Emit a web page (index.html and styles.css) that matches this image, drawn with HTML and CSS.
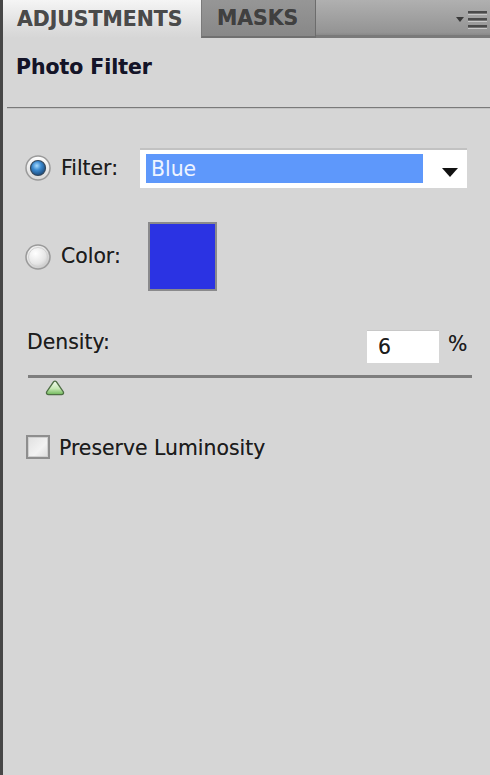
FILE: index.html
```html
<!DOCTYPE html>
<html>
<head>
<meta charset="utf-8">
<link rel="stylesheet" href="styles.css">
</head>
<body>
<div class="panel">
  <div class="tabbar">
    <div class="tab active">ADJUSTMENTS</div>
    <div class="tab inactive">MASKS</div>
    <div class="tab-fill">
      <svg class="menu-icon" width="32" height="20" viewBox="0 0 32 20">
        <polygon points="0,7 8,7 4,12" fill="#3a3a3a"/>
        <rect x="12" y="1" width="19" height="2.5" fill="#4a4a4a"/>
        <rect x="12" y="4" width="19" height="1" fill="#c8c8c8"/>
        <rect x="12" y="8" width="19" height="2.5" fill="#4a4a4a"/>
        <rect x="12" y="11" width="19" height="1" fill="#c8c8c8"/>
        <rect x="12" y="15" width="19" height="2.5" fill="#4a4a4a"/>
        <rect x="12" y="18" width="19" height="1" fill="#c8c8c8"/>
      </svg>
    </div>
  </div>
  <div class="title">Photo Filter</div>
  <div class="sep"></div>
  <div class="content">
    <div class="row filter-row">
      <svg class="radio" width="26" height="26" viewBox="0 0 26 26">
        <defs>
          <radialGradient id="rbBlue" cx="42%" cy="35%" r="65%">
            <stop offset="0" stop-color="#a8dcff"/>
            <stop offset="0.45" stop-color="#3b8ad0"/>
            <stop offset="1" stop-color="#1b4a7c"/>
          </radialGradient>
          <linearGradient id="rbRing" x1="0" y1="0" x2="0" y2="1">
            <stop offset="0" stop-color="#ffffff"/>
            <stop offset="1" stop-color="#d8d8d8"/>
          </linearGradient>
        </defs>
        <circle cx="13" cy="13" r="12" fill="url(#rbRing)" stroke="#9a9a9a" stroke-width="1.5"/>
        <circle cx="13" cy="13" r="7.5" fill="url(#rbBlue)" stroke="#34485c" stroke-width="1.2"/>
      </svg>
      <span class="label">Filter:</span>
      <div class="select">
        <span class="sel-hl">Blue</span>
        <svg class="arrow" width="16" height="10" viewBox="0 0 16 10">
          <polygon points="0,0 16,0 8,9" fill="#111"/>
        </svg>
      </div>
    </div>
    <div class="row color-row">
      <svg class="radio" width="26" height="26" viewBox="0 0 26 26">
        <defs>
          <radialGradient id="rbOff" cx="40%" cy="35%" r="70%">
            <stop offset="0" stop-color="#ffffff"/>
            <stop offset="0.6" stop-color="#e6e6e6"/>
            <stop offset="1" stop-color="#c4c4c4"/>
          </radialGradient>
        </defs>
        <circle cx="13" cy="13" r="12" fill="url(#rbOff)" stroke="#9a9a9a" stroke-width="1.5"/>
        <circle cx="13" cy="13" r="9.5" fill="none" stroke="#d2d2d2" stroke-width="1"/>
      </svg>
      <span class="label">Color:</span>
      <div class="swatch"></div>
    </div>
    <div class="density-row">
      <span class="dlabel">Density:</span>
      <span class="num">6</span>
      <span class="pct">%</span>
    </div>
    <div class="track"></div>
    <div class="thumb-row">
      <svg class="thumb" style="margin-left: calc(6% - 10px)" width="20" height="16" viewBox="0 0 20 16">
        <defs>
          <linearGradient id="thumbG" x1="0" y1="0" x2="0" y2="1">
            <stop offset="0" stop-color="#f4fbf0"/>
            <stop offset="0.55" stop-color="#c6e8b4"/>
            <stop offset="1" stop-color="#6fb85a"/>
          </linearGradient>
        </defs>
        <path d="M8.6,1.8 Q10,0.6 11.4,1.8 L18.4,12 Q19,14.6 16.5,14.6 L3.5,14.6 Q1,14.6 1.6,12 Z" fill="url(#thumbG)" stroke="#4e6e44" stroke-width="1.3"/>
      </svg>
    </div>
    <div class="check-row">
      <span class="box"></span>
      <span class="clabel">Preserve Luminosity</span>
    </div>
  </div>
</div>
</body>
</html>
```
FILE: styles.css
```css
html, body {
  margin: 0;
  padding: 0;
  height: 100%;
}
body {
  background: #d6d6d6;
  font-family: "DejaVu Sans", Verdana, sans-serif;
  font-size: 20.4px;
  color: #1c1c1c;
  text-shadow: 0 0 0.5px rgba(0, 0, 0, 0.45);
}
.panel {
  height: 775px;
  border-left: 3px solid #474747;
  background: #d6d6d6;
  box-sizing: border-box;
  overflow: hidden;
}
.tabbar {
  display: flex;
  height: 38px;
  background: linear-gradient(#b0b0b0, #949494 85%, #7e7e7e);
}
.tab {
  font-weight: bold;
  line-height: 39px;
  height: 38px;
  box-sizing: border-box;
}
.tab.active {
  width: 198px;
  padding-left: 14px;
  color: #4a4a4a;
  background: linear-gradient(#f5f5f5, #dedede 70%, #d6d6d6);
}
.tab.inactive {
  width: 115px;
  padding-left: 15px;
  color: #404040;
  background: linear-gradient(#969696, #888888);
  border-left: 1px solid #7a7a7a;
  border-right: 1px solid #6c6c6c;
  border-bottom: 2px solid #707070;
  line-height: 37px;
}
.tab-fill {
  flex: 1;
  display: flex;
  justify-content: flex-end;
  align-items: flex-start;
  padding-top: 10px;
  padding-right: 2px;
  border-bottom: 3px solid #7a7a7a;
  box-sizing: border-box;
  height: 38px;
}
.title {
  font-weight: bold;
  color: #141428;
  line-height: 24px;
  margin-top: 17px;
  padding-left: 13px;
}
.sep {
  margin-top: 28px;
  margin-left: 4px;
  height: 1px;
  background: #7a7a7a;
  border-bottom: 1px solid #c4c4c4;
}
.content {
  padding-top: 39px;
}
.row {
  display: flex;
  align-items: center;
  padding-left: 22px;
}
.radio {
  flex: none;
  display: block;
}
.label {
  margin-left: 10px;
  width: 79px;
  line-height: 23px;
}
.filter-row {
  height: 40px;
}
.select {
  width: 327px;
  height: 40px;
  box-sizing: border-box;
  background: #ffffff;
  border-top: 2px solid #c2c2c2;
  padding: 4px 0 0 6px;
  display: flex;
  align-items: flex-start;
}
.sel-hl {
  width: 272px;
  height: 29px;
  background: #5e98fb;
  color: #eef4ff;
  text-shadow: none;
  padding-left: 5px;
  line-height: 31px;
}
.arrow {
  display: block;
  margin-left: 19px;
  margin-top: 14px;
}
.color-row {
  margin-top: 34px;
  height: 69px;
}
.swatch {
  margin-left: 8px;
  width: 69px;
  height: 69px;
  box-sizing: border-box;
  border: 2px solid #8a8a8c;
  background: #2b33e3;
}
.density-row {
  display: flex;
  align-items: flex-start;
  margin-top: 39px;
  padding-left: 24px;
  height: 33px;
}
.dlabel {
  width: 340px;
  line-height: 23px;
  margin-top: 1px;
}
.num {
  width: 72px;
  height: 33px;
  box-sizing: border-box;
  background: #ffffff;
  border-top: 1px solid #c8c8c8;
  padding: 5px 0 0 11px;
  line-height: 23px;
}
.pct {
  margin-left: 9px;
  line-height: 23px;
  margin-top: 3px;
}
.track {
  margin-top: 12px;
  margin-left: 25px;
  width: 444px;
  height: 3px;
  background: #7e7e7e;
}
.thumb-row {
  margin-left: 25px;
  width: 444px;
  height: 16px;
  margin-top: 2px;
}
.thumb {
  display: block;
}
.check-row {
  display: flex;
  align-items: center;
  margin-top: 38px;
  padding-left: 23px;
}
.box {
  width: 24px;
  height: 24px;
  box-sizing: border-box;
  border: 2px solid #8e8e8e;
  background: linear-gradient(135deg, #e0e0e0, #f2f2f2 60%, #dcdcdc);
  box-shadow: inset 0 0 0 1px #d0d0d0;
}
.clabel {
  margin-left: 9px;
  line-height: 23px;
  margin-top: 3px;
}
```
